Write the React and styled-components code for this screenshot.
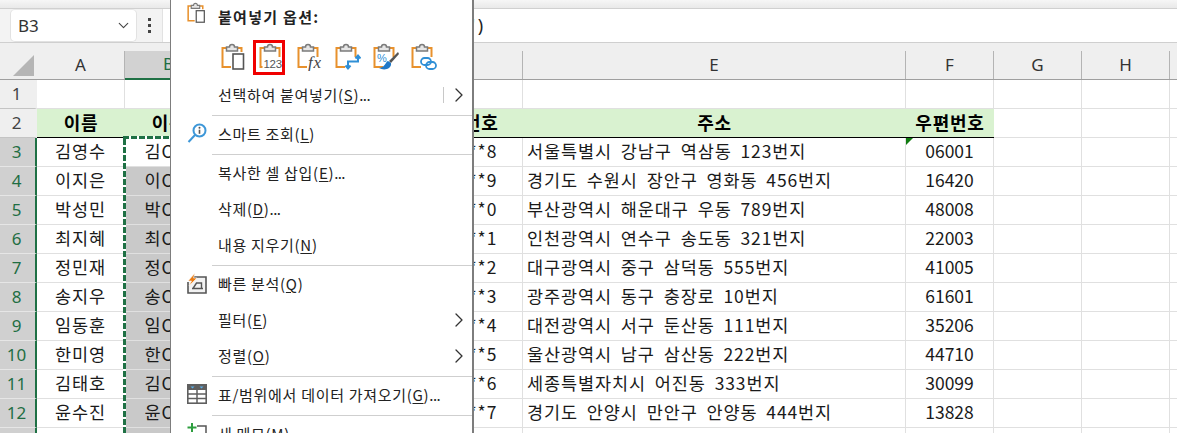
import React from 'react'
import styled, {createGlobalStyle} from 'styled-components'
import {ChevronDown, ChevronRight} from 'lucide-react'

const GlobalStyle = createGlobalStyle`
html, body {
  margin: 0;
  height: 100%;
  overflow: hidden;
  background: #fff;
}
* { box-sizing: border-box; }
`

const KR = `"Noto Sans CJK KR", "Noto Sans", sans-serif`
const LATIN = `"Noto Sans", "Noto Sans CJK KR", sans-serif`
const COLUMNS = '37px 88px 88px 192px 118px 383px 88px 88px 88px 88px'

const Page = styled.div`
position: relative;
width: 1177px;
height: 433px;
overflow: hidden;
font-family: ${KR};
color: #1a1a1a;
`

const TopStrip = styled.div`
height: 9px;
background: linear-gradient(#f6f6f6, #e9e9e9);
border-bottom: 1px solid #d0d0d0;
`

const FormulaRow = styled.div`
display: flex;
height: 34px;
background: #f3f3f3;
border-bottom: 1px solid #cfcfcf;
`

const NameBox = styled.div`
display: flex;
align-items: center;
justify-content: space-between;
width: 127px;
margin-left: 10px;
padding: 0 4px 0 7px;
background: #fff;
border: 1px solid #e2e2e2;
border-top-color: #e8e8e8;
border-radius: 5px;
font: 17px ${LATIN};
color: #333;
`

const Dots = styled.div`
display: flex;
flex-direction: column;
justify-content: center;
align-items: center;
gap: 3px;
width: 25px;
span {
  width: 3px;
  height: 3px;
  background: #444;
}
`

const FormulaInput = styled.div`
flex: 1;
background: #fff;
border-left: 1px solid #e2e2e2;
padding-left: 308px;
font: 18px/32px ${LATIN};
white-space: nowrap;
color: #222;
b {
  font-weight: 400;
  color: #2a7fc9;
  margin-right: -2px;
}
`

const Sheet = styled.div`
position: relative;
`

const SheetRow = styled.div`
display: grid;
grid-template-columns: ${COLUMNS};
height: ${({$height}) => $height || 29}px;
`

const CornerCell = styled.div`
position: relative;
background: #efefef;
border-bottom: 1px solid #9f9f9f;
&::after {
  content: '';
  position: absolute;
  right: 3px;
  bottom: 3px;
  border-style: solid;
  border-width: 0 0 21px 21px;
  border-color: transparent transparent #b5b5b5 transparent;
}
`

const ColumnHead = styled.div`
display: flex;
align-items: flex-end;
background: ${({$selected}) => ($selected ? 'linear-gradient(#efefef 8px, #d2d2d2 8px)' : '#efefef')};
border-bottom: ${({$selected}) => ($selected ? '2px solid #1f7145' : '1px solid #9f9f9f')};
`

const ColumnLabel = styled.div`
width: 100%;
height: 28px;
text-align: center;
font: 17px/27px ${LATIN};
color: ${({$selected}) => ($selected ? '#1f6e43' : '#333')};
border-right: 1px solid #b4b4b4;
`

const RowHead = styled.div`
display: flex;
align-items: center;
justify-content: center;
font: 17px ${LATIN};
padding: 0 2px 2px 0;
background: ${({$selected}) => ($selected ? '#d0d0d0' : '#efefef')};
color: ${({$selected}) => ($selected ? '#1f6e43' : '#444')};
border-bottom: 1px solid ${({$selected}) => ($selected ? '#e6e6e6' : '#c4c4c4')};
border-right: 2px solid ${({$selected}) => ($selected ? '#1f7145' : '#efefef')};
`

const Cell = styled.div`
position: relative;
display: flex;
align-items: center;
justify-content: ${({$left}) => ($left ? 'flex-start' : 'center')};
padding: 0 0 3px ${({$left}) => ($left ? '4px' : '0')};
font-size: 17.5px;
letter-spacing: ${({$tight}) => ($tight ? '0' : '0.9px')};
word-spacing: 4px;
white-space: nowrap;
overflow: hidden;
background: ${({$shade}) => ($shade ? '#c9c9c9' : '#fff')};
border-right: 1px solid ${({$shade}) => ($shade ? '#c9c9c9' : '#e0e0e0')};
border-bottom: 1px solid #e0e0e0;
`

const HeadCell = styled.div`
display: flex;
align-items: center;
justify-content: center;
padding-bottom: 3px;
font-size: 18px;
font-weight: 700;
letter-spacing: 0.8px;
white-space: nowrap;
overflow: hidden;
color: #000;
background: #d9f2d0;
border-bottom: 1px solid #000;
`

const ErrorMark = styled.i`
position: absolute;
left: 0;
top: 0;
border-style: solid;
border-width: 7px 7px 0 0;
border-color: #107c10 transparent transparent transparent;
`

const Ants = styled.div`
position: absolute;
left: 123px;
top: 93px;
width: 60px;
bottom: 0;
pointer-events: none;
background:
  repeating-linear-gradient(90deg, #1f7145 0 6px, #fff 6px 8px) 0 0 / 100% 3px no-repeat,
  repeating-linear-gradient(0deg, #1f7145 0 6px, #fff 6px 8px) 0 0 / 3px 100% no-repeat;
`

const Menu = styled.div`
position: absolute;
left: 170px;
top: 0;
width: 304px;
height: 433px;
overflow: hidden;
background: #fff;
border-left: 1px solid #7d7d7d;
border-right: 2px solid #7d7d7d;
display: flex;
flex-direction: column;
font-size: 15px;
letter-spacing: 0.7px;
color: #222;
u { text-underline-offset: 2px; }
`

const MenuHeader = styled.div`
display: flex;
align-items: center;
height: 36px;
padding-bottom: 4px;
font-weight: 700;
letter-spacing: 1.3px;
flex: none;
`

const IconSlot = styled.div`
display: flex;
align-items: center;
justify-content: center;
flex: none;
width: 47px;
padding-left: 5px;
align-self: ${({$top}) => ($top ? 'flex-start' : 'auto')};
padding-top: ${({$top}) => ($top ? '2px' : '0')};
`

const PasteRow = styled.div`
display: flex;
align-items: center;
height: 42px;
padding-left: 44px;
flex: none;
`

const PasteButton = styled.div`
display: flex;
align-items: center;
justify-content: flex-start;
width: 32px;
height: 35px;
padding-left: 3px;
margin-right: 6px;
border: ${({$active}) => ($active ? '3px solid #f00000' : '3px solid transparent')};
svg { flex: none; }
`

const MenuItem = styled.div`
display: flex;
align-items: center;
height: 36px;
padding-bottom: 4px;
flex: none;
white-space: nowrap;
position: relative;
`

const Ellipsis = styled.span`
letter-spacing: -0.6px;
`

const MenuArrow = styled(ChevronRight)`
position: absolute;
right: 1px;
top: 5px;
color: #333;
`

const SplitBar = styled.span`
position: absolute;
left: 272px;
top: 9px;
height: 16px;
width: 1px;
background: #c8c8c8;
`

const Divider = styled.div`
flex: none;
height: 3px;
margin-left: 41px;
display: flex;
align-items: center;
&::after {
  content: '';
  width: 100%;
  height: 1px;
  background: #cfcfcf;
}
`

const ORANGE = '#e8912d'
const CLIP = '#7b7b7b'
const BLUE = '#2f8fd6'

function Board({right = 17}) {
  return (
    <>
      <path d={`M6 5H1.5V24H10M16 5H20.5V${right}`} fill="none" stroke={ORANGE} strokeWidth="2" />
      <path d="M5.5 8V4H8.5A2.5 2.5 0 0 1 13.5 4H16.5V8Z" fill="#e6e6e6" stroke={CLIP} strokeWidth="1.5" />
    </>
  )
}

function PasteIcon({kind}) {
  return (
    <svg width="26" height="28" viewBox="0 0 26 28">
      {kind === 'values' ? (
        <>
          <path d="M6 5H1.5V24H3.5M16 5H20.5V14" fill="none" stroke={ORANGE} strokeWidth="2" />
          <path d="M5.5 8V4H8.5A2.5 2.5 0 0 1 13.5 4H16.5V8Z" fill="#e6e6e6" stroke={CLIP} strokeWidth="1.5" />
          <text x="4.5" y="25" fontFamily="Liberation Sans" fontSize="11.5" letterSpacing="-0.3" fill="#555">123</text>
        </>
      ) : (
        <Board right={kind === 'plain' ? 9 : 14} />
      )}
      {kind === 'plain' && <rect x="12" y="11" width="10.5" height="15" fill="#fff" stroke="#555" strokeWidth="1.6" />}
      {kind === 'formula' && (
        <text x="11" y="25" fontFamily="Liberation Serif" fontStyle="italic" fontSize="17" fill="#444">fx</text>
      )}
      {kind === 'swap' && (
        <path d="M13 25V18.5H23V13M10.5 22.5L13 25.5L15.5 22.5M20.5 15.5L23 12.5L25.5 15.5" fill="none" stroke={BLUE} strokeWidth="2" />
      )}
      {kind === 'brush' && (
        <>
          <text x="4" y="19" fontFamily="Liberation Sans" fontSize="11" fill={BLUE}>%</text>
          <path d="M25 9L16 18L18 20L26 11Z" fill="#555" />
          <path d="M15 18C12 19 13 24 6 25C11 28 19 26 18 20Z" fill="#1f78c8" />
        </>
      )}
      {kind === 'link' && (
        <g fill="none" stroke={BLUE} strokeWidth="1.8">
          <rect x="10" y="15" width="10" height="7" rx="3.5" />
          <rect x="15" y="19" width="10" height="7" rx="3.5" />
        </g>
      )}
    </svg>
  )
}

const SmartIcon = () => (
  <svg width="20" height="21" viewBox="0 0 20 21">
    <circle cx="12.5" cy="7.5" r="6" fill="#fff" stroke="#3d97d8" strokeWidth="2" />
    <path d="M8 12L1.5 19" stroke="#3d97d8" strokeWidth="2" />
    <circle cx="12.5" cy="4.7" r="1" fill="#555" />
    <path d="M12.5 6.7V10.8" stroke="#555" strokeWidth="1.6" />
  </svg>
)

const QuickIcon = () => (
  <svg width="20" height="21" viewBox="0 0 20 21">
    <path d="M6 4H19V20H1V9" fill="#f2f2f2" stroke="#555" strokeWidth="1.6" />
    <path d="M5 15.5H16M6 15.5L9.5 10H14.5V15.5" fill="none" stroke="#555" strokeWidth="1.4" />
    <path d="M8 0L1 8H4.5L2 13L10 5H6.5Z" fill="#ea7b12" stroke="#fff" strokeWidth="0.6" />
  </svg>
)

const TableIcon = () => (
  <svg width="20" height="20" viewBox="0 0 20 20">
    <rect x="0.8" y="0.8" width="18.4" height="18.4" fill="#fff" stroke="#5f5f5f" strokeWidth="1.6" />
    <rect x="1" y="1" width="18" height="5" fill="#5f5f5f" />
    <path d="M3.5 2.5H7.5L5.5 4.5ZM12.5 2.5H16.5L14.5 4.5Z" fill="#58b0ec" />
    <path d="M1 10H19M1 14.5H19M10 6V19" stroke="#5f5f5f" strokeWidth="1.5" />
  </svg>
)

const NoteIcon = () => (
  <svg width="20" height="20" viewBox="0 0 20 20">
    <path d="M10 3H19V20H4V10" fill="#fff" stroke="#555" strokeWidth="1.5" />
    <path d="M5 0V9M0.5 4.5H9.5" stroke="#2e9e3f" strokeWidth="2" />
  </svg>
)

const people = [
  ['김영수', '김O수', '8', '서울특별시 강남구 역삼동 123번지', '06001'],
  ['이지은', '이O은', '9', '경기도 수원시 장안구 영화동 456번지', '16420'],
  ['박성민', '박O민', '0', '부산광역시 해운대구 우동 789번지', '48008'],
  ['최지혜', '최O혜', '1', '인천광역시 연수구 송도동 321번지', '22003'],
  ['정민재', '정O재', '2', '대구광역시 중구 삼덕동 555번지', '41005'],
  ['송지우', '송O우', '3', '광주광역시 동구 충장로 10번지', '61601'],
  ['임동훈', '임O훈', '4', '대전광역시 서구 둔산동 111번지', '35206'],
  ['한미영', '한O영', '5', '울산광역시 남구 삼산동 222번지', '44710'],
  ['김태호', '김O호', '6', '세종특별자치시 어진동 333번지', '30099'],
  ['윤수진', '윤O진', '7', '경기도 안양시 만안구 안양동 444번지', '13828'],
  ['', '', '', '', ''],
]

// last column is only a sliver in the window, its letter is out of view
const columnLetters = ['A', 'B', 'C', 'D', 'E', 'F', 'G', 'H', '']

function Grid() {
  return (
    <Sheet>
      <SheetRow $height={37}>
        <CornerCell />
        {columnLetters.map(l => (
          <ColumnHead key={l} $selected={l === 'B'}>
            <ColumnLabel $selected={l === 'B'}>{l}</ColumnLabel>
          </ColumnHead>
        ))}
      </SheetRow>
      <SheetRow>
        <RowHead>1</RowHead>
        {columnLetters.map(l => <Cell key={l} />)}
      </SheetRow>
      <SheetRow>
        <RowHead>2</RowHead>
        <HeadCell>이름</HeadCell>
        <HeadCell>이름</HeadCell>
        <HeadCell>전화</HeadCell>
        <HeadCell>전화번호</HeadCell>
        <HeadCell>주소</HeadCell>
        <HeadCell>우편번호</HeadCell>
        <Cell />
        <Cell />
        <Cell />
      </SheetRow>
      {people.map((p, i) => (
        <SheetRow key={i}>
          <RowHead $selected>{i + 3}</RowHead>
          <Cell>{p[0]}</Cell>
          <Cell $shade={i > 0}>{p[1]}</Cell>
          <Cell />
          <Cell>{p[2] && `010-**${p[2]}`}</Cell>
          <Cell $left>{p[3]}</Cell>
          <Cell $tight>
            {i === 0 && <ErrorMark />}
            {p[4]}
          </Cell>
          <Cell />
          <Cell />
          <Cell />
        </SheetRow>
      ))}
      <Ants />
    </Sheet>
  )
}

function ContextMenu() {
  return (
    <Menu>
      <MenuHeader>
        <IconSlot $top>
          <svg width="20" height="22" viewBox="0 0 26 28"><Board right={9} /><rect x="12" y="11" width="10.5" height="15" fill="#fff" stroke="#555" strokeWidth="1.6" /></svg>
        </IconSlot>
        붙여넣기 옵션:
      </MenuHeader>
      <PasteRow>
        {['plain', 'values', 'formula', 'swap', 'brush', 'link'].map(k => (
          <PasteButton key={k} $active={k === 'values'}>
            <PasteIcon kind={k} />
          </PasteButton>
        ))}
      </PasteRow>
      <MenuItem>
        <IconSlot />
        선택하여 붙여넣기(<u>S</u>)<Ellipsis>...</Ellipsis>
        <SplitBar />
        <MenuArrow size={24} strokeWidth={1.3} />
      </MenuItem>
      <Divider />
      <MenuItem>
        <IconSlot><SmartIcon /></IconSlot>
        스마트 조회(<u>L</u>)
      </MenuItem>
      <Divider />
      <MenuItem><IconSlot />복사한 셀 삽입(<u>E</u>)<Ellipsis>...</Ellipsis></MenuItem>
      <MenuItem><IconSlot />삭제(<u>D</u>)<Ellipsis>...</Ellipsis></MenuItem>
      <MenuItem><IconSlot />내용 지우기(<u>N</u>)</MenuItem>
      <Divider />
      <MenuItem>
        <IconSlot><QuickIcon /></IconSlot>
        빠른 분석(<u>Q</u>)
      </MenuItem>
      <MenuItem>
        <IconSlot />
        필터(<u>E</u>)
        <MenuArrow size={24} strokeWidth={1.3} />
      </MenuItem>
      <MenuItem>
        <IconSlot />
        정렬(<u>O</u>)
        <MenuArrow size={24} strokeWidth={1.3} />
      </MenuItem>
      <Divider />
      <MenuItem>
        <IconSlot><TableIcon /></IconSlot>
        표/범위에서 데이터 가져오기(<u>G</u>)<Ellipsis>...</Ellipsis>
      </MenuItem>
      <Divider />
      <MenuItem>
        <IconSlot><NoteIcon /></IconSlot>
        새 메모(<u>M</u>)
      </MenuItem>
    </Menu>
  )
}

export default function App() {
  return (
    <Page>
      <GlobalStyle />
      <TopStrip />
      <FormulaRow>
        <NameBox>
          B3
          <ChevronDown size={17} strokeWidth={1.6} color="#444" />
        </NameBox>
        <Dots><span /><span /><span /></Dots>
        <FormulaInput><b>'</b> )</FormulaInput>
      </FormulaRow>
      <Grid />
      <ContextMenu />
    </Page>
  )
}
